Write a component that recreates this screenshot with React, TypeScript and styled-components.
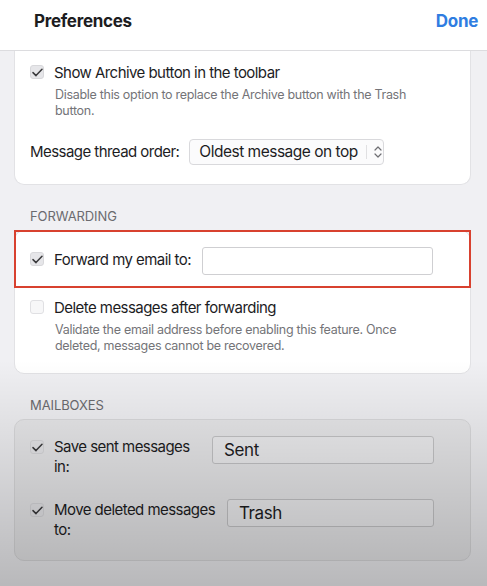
import React from "react";
import styled, { createGlobalStyle } from "styled-components";

const GlobalStyle = createGlobalStyle`
  html, body {
    margin: 0;
    padding: 0;
    width: 487px;
    height: 586px;
    overflow: hidden;
    background: #f0f0f3;
    font-family: Inter, "Liberation Sans", sans-serif;
    color: #1d1d1f;
  }
`;

const Page = styled.div`
  position: relative;
  width: 487px;
  height: 586px;
  display: flex;
  flex-direction: column;
  background: #f0f0f3;
  overflow: hidden;`;

const Shade = styled.div`
  position: absolute;
  inset: 0;
  pointer-events: none;
  background: linear-gradient(to bottom, rgba(0,0,0,0) 0px, rgba(0,0,0,0) 360px, rgba(0,0,0,0.23) 586px);`;

const Header = styled.div`
  height: 51px;
  flex-shrink: 0;
  background: #ffffff;
  border-bottom: 1px solid #dcdcdf;
  display: flex;
  align-items: center;
  justify-content: space-between;
  padding: 0 9px 0 34px;
  box-sizing: border-box;`;

const Title = styled.div`
  font-size: 17px;
  font-weight: 700;
  letter-spacing: -0.3px;
  margin-top: -8px;`;

const Done = styled.div`
  font-size: 17px;
  font-weight: 700;
  color: #2f7de1;
  letter-spacing: -0.3px;
  margin-top: -8px;`;

const Body = styled.div`
  display: flex;
  flex-direction: column;
  padding: 0 16px 0 14px;`;

const Card = styled.div<{ $top?: boolean }>`
  background: #ffffff;
  border: 1px solid #e2e2e5;
  border-radius: ${(p) => (p.$top ? "0 0 10px 10px" : "10px")};
  border-top: ${(p) => (p.$top ? "none" : "1px solid #e2e2e5")};
  display: flex;
  flex-direction: column;`;

const SectionLabel = styled.div`
  font-size: 13px;
  line-height: 16px;
  color: #6b6b6f;
  padding: 23px 0 6px 16px;
  letter-spacing: -0.1px;`;

const Row = styled.div<{ $h: number }>`
  display: flex;
  align-items: center;
  height: ${(p) => p.$h}px;
  padding-left: 15px;`;

const Highlight = styled.div`
  display: flex;
  align-items: center;
  height: 58px;
  margin: -1px -1px 0 -1px;
  padding-left: 14px;
  border: 2px solid #d8412f;
  box-sizing: border-box;`;

const Box = styled.span<{ $on: boolean }>`
  width: 14px;
  height: 14px;
  flex-shrink: 0;
  border-radius: 3px;
  background: ${(p) => (p.$on ? "#e6e6e9" : "#f7f7f8")};
  border: 1px solid ${(p) => (p.$on ? "#d8d8db" : "#e0e0e3")};
  box-sizing: border-box;
  display: flex;
  align-items: center;
  justify-content: center;
  margin-right: 10px;`;

const Label = styled.div`
  font-size: 15px;
  letter-spacing: -0.55px;`;

const Desc = styled.div<{ $pb?: number }>`
  font-size: 12.5px;
  line-height: 16px;
  color: #747478;
  letter-spacing: -0.3px;
  padding: 0 40px ${(p) => p.$pb ?? 0}px 40px;`;

const Select = styled.div`
  margin-left: 10px;
  width: 195px;
  height: 26px;
  box-sizing: border-box;
  border: 1px solid #d9d9dc;
  border-radius: 4px;
  background: #fbfbfc;
  display: flex;
  align-items: center;
  padding-left: 9px;
  font-size: 15.5px;
  letter-spacing: -0.5px;`;

const SelectText = styled.span`
  flex: 1;`;

const Divider = styled.span`
  width: 1px;
  height: 14px;
  background: #e0e0e2;
  margin-right: 6px;`;

const Input = styled.div<{ $w: number }>`
  width: ${(p) => p.$w}px;
  height: 28px;
  margin-left: 11px;
  margin-top: 4px;
  box-sizing: border-box;
  border: 1px solid #cfcfd2;
  border-radius: 3px;
  background: #ffffff;`;

const GreyCard = styled(Card)`
  background: #e8e8ea;
  border-color: #dadadc;`;

const MailRow = styled.div<{ $pt: number; $pb?: number }>`
  display: flex;
  align-items: flex-start;
  padding: ${(p) => p.$pt}px 0 ${(p) => p.$pb ?? 0}px 15px;`;

const MailLabel = styled.div<{ $w: number }>`
  width: ${(p) => p.$w}px;
  font-size: 15px;
  line-height: 20px;
  letter-spacing: -0.55px;`;

const CheckWrap = styled.div`
  display: flex;
  margin-top: 3px;`;

const Field = styled.div<{ $w: number; $ml: number }>`
  width: ${(p) => p.$w}px;
  margin-left: ${(p) => p.$ml}px;
  height: 28px;
  margin-top: -1px;
  box-sizing: border-box;
  border: 1px solid #c4c4c6;
  border-radius: 3px;
  background: #ededef;
  display: flex;
  align-items: center;
  padding-left: 11px;
  font-size: 17px;
  letter-spacing: -0.4px;`;

const Check = ({ on }: { on: boolean }) => (
  <Box $on={on}>
    {on && (
      <svg width="11" height="9" viewBox="0 0 11 9">
        <path d="M1 4.6 L4 7.6 L10 1.2" fill="none" stroke="#3a3a3c" strokeWidth="1.5" strokeLinecap="round" strokeLinejoin="round" />
      </svg>
    )}
  </Box>
);

const Chevrons = () => (
  <svg width="10" height="16" viewBox="0 0 10 16">
    <path d="M2 6 L5 3 L8 6 M2 10 L5 13 L8 10" fill="none" stroke="#6e6e72" strokeWidth="1.2" strokeLinecap="round" strokeLinejoin="round" />
  </svg>
);

export default function App() {
  return (
    <Page>
      <GlobalStyle />
      <Header>
        <Title>Preferences</Title>
        <Done>Done</Done>
      </Header>
      <Body>
        <Card $top>
          <Row $h={30} style={{ paddingTop: 6 }}>
            <Check on />
            <Label>Show Archive button in the toolbar</Label>
          </Row>
          <Desc>Disable this option to replace the Archive button with the Trash button.</Desc>
          <Row $h={65}>
            <Label>Message thread order:</Label>
            <Select>
              <SelectText>Oldest message on top</SelectText>
              <Divider />
              <Chevrons />
            </Select>
          </Row>
        </Card>

        <SectionLabel>FORWARDING</SectionLabel>
        <Card>
          <Highlight>
            <Check on />
            <Label>Forward my email to:</Label>
            <Input $w={231} />
          </Highlight>
          <Row $h={30} style={{ paddingTop: 4 }}>
            <Check on={false} />
            <Label>Delete messages after forwarding</Label>
          </Row>
          <Desc $pb={19}>
            Validate the email address before enabling this feature. Once deleted, messages cannot be recovered.
          </Desc>
        </Card>

        <SectionLabel>MAILBOXES</SectionLabel>
        <GreyCard>
          <MailRow $pt={17}>
            <CheckWrap><Check on /></CheckWrap>
            <MailLabel $w={144}>Save sent messages in:</MailLabel>
            <Field $w={222} $ml={14}>Sent</Field>
          </MailRow>
          <MailRow $pt={23} $pb={20}>
            <CheckWrap><Check on /></CheckWrap>
            <MailLabel $w={168}>Move deleted messages to:</MailLabel>
            <Field $w={207} $ml={5}>Trash</Field>
          </MailRow>
        </GreyCard>
      </Body>
      <Shade />
    </Page>
  );
}
